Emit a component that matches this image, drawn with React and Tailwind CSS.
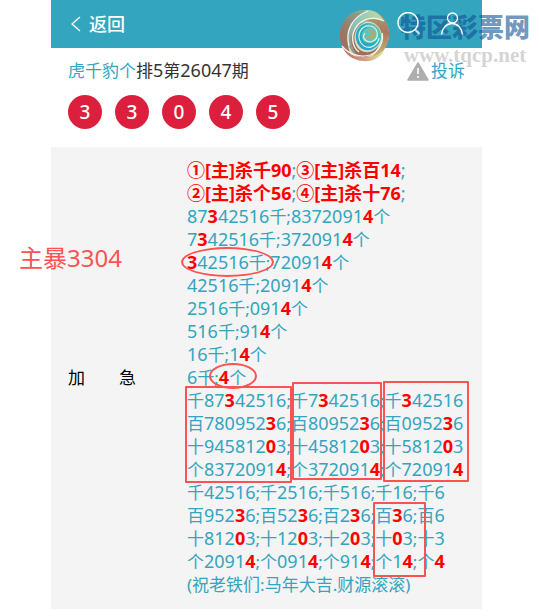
import React from 'react';

const balls = [3, 3, 0, 4, 5];

// Text between asterisks is highlighted
const headLines = [
  '*①[主]杀千90*;*③[主]杀百14*;',
  '*②[主]杀个56*;*④[主]杀十76*;',
];

const lines = [
  '87*3*42516千;8372091*4*个',
  '7*3*42516千;372091*4*个',
  '*3*42516千;72091*4*个',
  '42516千;2091*4*个',
  '2516千;091*4*个',
  '516千;91*4*个',
  '16千;1*4*个',
  '6千;*4*个',
  '千87*3*42516;千7*3*42516;千*3*42516',
  '百780952*3*6;百80952*3*6;百0952*3*6',
  '十945812*0*3;十45812*0*3;十5812*0*3',
  '个8372091*4*;个372091*4*;个72091*4*',
  '千42516;千2516;千516;千16;千6',
  '百952*3*6;百52*3*6;百2*3*6;百*3*6;百6',
  '十812*0*3;十12*0*3;十2*0*3;十*0*3;十3',
  '个2091*4*;个091*4*;个91*4*;个1*4*;个*4*',
  '(祝老铁们:马年大吉.财源滚滚)',
];

// Digits are set slightly larger than the Chinese characters around them
const Mixed = ({ text }) =>
  text.split(/(\d+)/).map((part, i) =>
    /\d/.test(part) ? (
      <span key={i} className="text-[18px] leading-none">{part}</span>
    ) : (
      part
    )
  );

const Line = ({ text }) => (
  <p className="whitespace-nowrap">
    {text.split('*').map((part, i) =>
      i % 2 ? (
        <b key={i} className="font-bold text-[#ff0000]">
          <Mixed text={part} />
        </b>
      ) : (
        <Mixed key={i} text={part} />
      )
    )}
  </p>
);

const Watermark = () => (
  <div className="pointer-events-none absolute top-2 right-[9px] flex items-start">
    <svg className="mr-2 h-[54px] w-[54px]" viewBox="0 0 54 54" fill="none" aria-hidden="true">
      <defs>
        <linearGradient id="left" x1="0" y1="1" x2="1" y2="0">
          <stop offset="0" stopColor="#ac6355" />
          <stop offset="0.45" stopColor="#95806c" />
          <stop offset="1" stopColor="#80b79b" />
        </linearGradient>
        <linearGradient id="band" x1="0" y1="1" x2="1" y2="0">
          <stop offset="0" stopColor="#8a8f7c" />
          <stop offset="0.5" stopColor="#8cc5bd" />
          <stop offset="1" stopColor="#c5dc9c" />
        </linearGradient>
        <linearGradient id="right" x1="0" y1="0" x2="0" y2="1">
          <stop offset="0" stopColor="#a5a675" />
          <stop offset="0.45" stopColor="#ae7560" />
          <stop offset="1" stopColor="#cbbb75" />
        </linearGradient>
        <linearGradient id="tail" x1="0" y1="0" x2="1" y2="0">
          <stop offset="0" stopColor="#b1675b" />
          <stop offset="0.5" stopColor="#cf9b83" />
          <stop offset="1" stopColor="#e6eb99" />
        </linearGradient>
        <linearGradient id="eye" x1="0" y1="1" x2="1" y2="0">
          <stop offset="0" stopColor="#2c9fc9" />
          <stop offset="0.6" stopColor="#22b3c9" />
          <stop offset="1" stopColor="#9fce8c" />
        </linearGradient>
      </defs>
      <circle cx="27" cy="26" r="24" fill="#d5dfc4" />
      <path d="M23 2C9 5 1 17 2 30c1 8 5 14 11 17C6 32 10 13 30 3 28 2 26 2 23 2Z" fill="url(#left)" />
      <path d="M31 2C14 10 7 24 11 38c2 5 5 9 10 11-6-10-7-22 0-30C28 11 38 9 46 13 43 7 38 3 31 2Z" fill="url(#band)" />
      <path d="M36 3c10 4 16 14 15 25-1 12-8 20-19 22 8-6 13-13 12-22-1-10-9-16-18-14 8-6 15-4 20-1-2-4-6-8-10-10Z" fill="url(#right)" />
      <path d="M28 14c-11 3-14 14-10 23 5 10 18 9 23 0-3 9-13 15-21 11C9 36 12 17 28 14Z" fill="#a26d5d" />
      <path d="M29 15c9-1 15 7 14 15-2 11-14 16-21 9-8-9-4-22 7-24Z" fill="url(#eye)" />
      <path d="M24 26c1-6 9-9 14-4 5 6 0 14-7 13-5 0-8-4-7-9Z" fill="#62c3ba" />
      <path d="M27 28c3 4 10 3 10-2 0-4-5-5-7-3 3 0 4 2 3 4s-4 2-6 1Z" fill="#b7a961" />
      <path d="M4 38c5 8 14 12 24 11 8 0 14-3 19-8-4 9-13 13-22 12C14 52 7 46 4 38Z" fill="url(#tail)" />
      <path d="M46 13c-9-5-21-3-27 5-7 9-5 21 2 26" stroke="#f2f6e8" strokeWidth="1.4" />
      <path d="M41 30c-2 9-12 13-18 5-5-8 0-18 9-17 8 1 10 12 3 15-6 3-12-3-8-8" stroke="#dff1dd" strokeWidth="1.2" />
      <path d="M30 3C14 9 7 23 11 38M4 38c6 8 18 12 28 9 10-4 14-14 12-22" stroke="#f4f3ea" strokeWidth="1.3" />
    </svg>
    <div className="flex flex-col items-center pt-[3px]">
      <span className="text-[26px] leading-[32px] font-black whitespace-nowrap text-[#105293]/60">特区彩票网</span>
      <span className="font-['Liberation_Serif',serif] text-[21px] leading-6 font-bold text-[#aaaaaa]/50">www.tqcp.net</span>
    </div>
  </div>
);

// Red marks drawn by hand over the number rows
const Marks = () => (
  <div className="pointer-events-none absolute inset-0" aria-hidden="true">
    <div className="absolute top-[88px] -left-[6px] h-[30px] w-[93px] rounded-[50%] border-2 border-[#fb5352]" />
    <div className="absolute top-[204px] left-[22px] h-[26px] w-[48px] rounded-[50%] border-2 border-[#fb5352]" />
    <div className="absolute top-[227px] -left-[2px] h-[97px] w-[107px] rounded-[1px] border-2 border-[#fb5352]" />
    <div className="absolute top-[223px] left-[105px] h-[98px] w-[90px] rounded-[1px] border-2 border-[#fb5352]" />
    <div className="absolute top-[222px] left-[196px] h-[101px] w-[86px] rounded-[1px] border-2 border-[#fb5352]" />
    <div className="absolute top-[343px] left-[186px] h-[75px] w-[53px] rounded-[1px] border-2 border-[#fb5352]" />
  </div>
);

const App = () => {
  return (
    <div className="relative bg-white pr-[57px] pb-2 pl-[51px] font-['Noto_Sans','Noto_Sans_CJK_SC',sans-serif] text-[17px]">
      <header className="flex h-12 items-center justify-between bg-[#33a5bf] pr-[18px] pl-5 text-white">
        <a href="#back" className="flex items-center gap-2 text-[18px] font-medium">
          <svg className="h-4 w-[10px]" viewBox="0 0 10 16" fill="none" stroke="currentColor" strokeWidth="1.3" aria-hidden="true">
            <path d="M9 1 1 8l8 7" />
          </svg>
          返回
        </a>
        <div className="relative z-10 flex items-center gap-5">
          <button type="button" aria-label="搜索">
            <svg className="h-6 w-6" viewBox="0 0 24 24" fill="none" stroke="currentColor" strokeWidth="1.4">
              <circle cx="12" cy="10.500" r="10" />
              <path d="m19 17.500 4.500 4.500" strokeWidth="2" strokeOpacity="0.7" />
            </svg>
          </button>
          <button type="button" aria-label="我的">
            <svg className="h-6 w-6" viewBox="0 0 24 24" fill="none" stroke="currentColor" strokeWidth="1.3">
              <circle cx="12.500" cy="6" r="5" />
              <path d="M1.500 22.500c.8-6.500 5-11 10.500-11s9.700 4.500 10.500 11" />
            </svg>
          </button>
        </div>
      </header>

      <main>
        <section className="px-[17px] pt-[11px] pb-[18px]">
          <div className="flex h-6 items-center justify-between text-[#333333]">
            <h1 className="whitespace-nowrap">
              <a href="#author" className="text-[#33a5bf]">虎千豹个</a>
              <Mixed text="排5第26047期" />
            </h1>
            <a href="#report" className="flex items-center gap-[2px] text-[#33a5bf]">
              <svg className="h-[19px] w-[22px]" viewBox="0 0 22 19" aria-hidden="true">
                <path d="M11 1 21 18H1Z" fill="#aeaeae" stroke="#aeaeae" strokeWidth="1.500" strokeLinejoin="round" />
                <path d="M11 6v6M11 14v2" stroke="#ffffff" strokeWidth="1.600" />
              </svg>
              投诉
            </a>
          </div>
          <div className="mt-3 flex gap-[13px]">
            {balls.map((ball, i) => (
              <span
                key={i}
                className="flex h-[34px] w-[34px] items-center justify-center rounded-full bg-[#dc1f3c] text-[19px] font-medium text-white"
              >
                {ball}
              </span>
            ))}
          </div>
        </section>

        <section className="flex items-center bg-[#f4f4f4] pt-3 pb-[13px] pl-[17px]">
          <h2 className="flex w-[68px] justify-between text-black">
            <span>加</span>
            <span>急</span>
          </h2>
          <div className="relative ml-[51px] leading-[23px] text-[#33a5bf]">
            <div className="text-[18px]">
              {headLines.map((line, i) => (
                <Line key={i} text={line} />
              ))}
            </div>
            {lines.map((line, i) => (
              <Line key={i} text={line} />
            ))}
            <Marks />
            <span className="absolute top-[83px] -left-[168px] text-[24px] leading-8 whitespace-nowrap text-[#fb5352]">
              主暴3304
            </span>
          </div>
        </section>
      </main>

      <Watermark />
    </div>
  );
};

export default App;
